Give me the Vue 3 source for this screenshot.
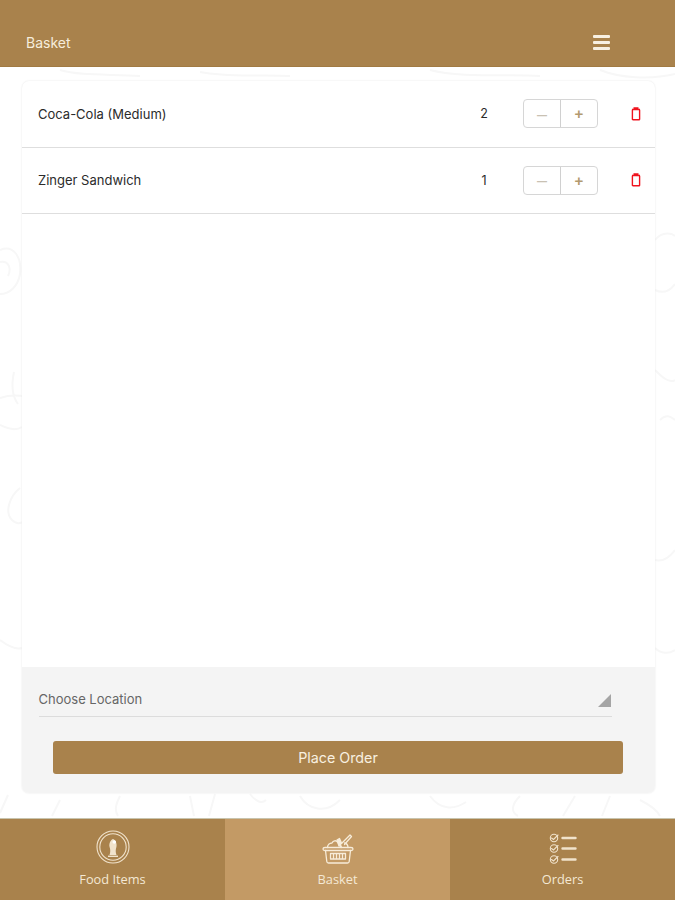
<template>
  <div class="screen">
    <svg class="doodles" viewBox="0 0 675 900" aria-hidden="true">
      <g fill="none" stroke="#f7f7f7" stroke-width="2">
        <path d="M0 250c14-6 22 8 20 24-2 12-10 20-20 20" />
        <path d="M0 262c8-2 12 6 8 14" />
        <path d="M0 398c12-4 20-2 22 -2M0 425c8 4 16 6 22 2" />
        <path d="M14 372c-3 14-2 24 4 32" />
        <path d="M20 488c-10 8-16 24-8 32 4 4 8 4 10 2" />
        <path d="M0 640c8 6 16 10 22 8" />
        <path d="M8 795l-8 18M60 800l-8 16M120 796c-4 8-6 14-2 20M190 796l4 20M215 794l-6 22M250 794c6 8 12 10 16 6M300 796c8 14 26 18 40 4" />
        <path d="M655 240c8-10 18-6 20-4M655 290c8 4 14 2 20-6" />
        <path d="M655 370c6 6 14 14 20 10M660 420c6-6 10-4 15 0" />
        <path d="M655 560c8 2 14-2 20-10M655 648c6 6 14 6 20 2" />
        <path d="M430 796c10 14 24 14 36 6M520 796c-8 8-10 16-2 20M575 796l-12 20M610 796l-8 20M640 800c12 6 18 12 20 16" />
        <path d="M60 70c20 6 50 4 80 6M200 72c30 6 60 2 90 4M430 70c30 8 80 4 110 6M600 70c20 8 50 10 75 4" />
      </g>
    </svg>

    <header class="topbar">
      <span class="title">Basket</span>
      <button class="menu" aria-label="Menu">
        <span></span><span></span><span></span>
      </button>
    </header>

    <main class="content">
      <section class="card">
        <div class="items">
          <div v-for="item in items" :key="item.name" class="row">
            <span class="name">{{ item.name }}</span>
            <span class="qty">{{ item.qty }}</span>
            <div class="stepper">
              <button class="minus" @click="dec(item)">–</button>
              <button class="plus" @click="item.qty++">+</button>
            </div>
            <button class="trash" aria-label="Remove" @click="remove(item)">
              <svg width="10" height="14" viewBox="0 0 10 14">
                <path d="M2.500 1h5M1 2.400h8" stroke="#f0131e" stroke-width="1.300" fill="none" />
                <rect x="1.400" y="2.600" width="7.200" height="10.200" rx=".6" stroke="#f0131e" stroke-width="1.400" fill="none" />
              </svg>
            </button>
          </div>
        </div>

        <div class="order">
          <div class="location">
            <span>Choose Location</span>
            <i class="corner"></i>
          </div>
          <button class="place">Place Order</button>
        </div>
      </section>
    </main>

    <nav class="tabs">
      <a class="tab">
        <svg width="36" height="36" viewBox="0 0 36 36" fill="none">
          <circle cx="18" cy="18" r="16" stroke="#f1e3cc" stroke-width="1.100" />
          <circle cx="18" cy="18" r="13.200" stroke="#f1e3cc" stroke-width="1.100" />
          <path d="M14.500 26c1-3 1-5 .1-8-.8-3 .7-7 3.400-8 2.700 1 4.200 5 3.400 8-.9 3-.9 5 .1 8z" fill="#f1e3cc" />
          <path d="M13 27.300h10" stroke="#f1e3cc" stroke-width="1.400" />
          <circle cx="19.300" cy="13" r="1.800" fill="#fff" />
        </svg>
        <span>Food Items</span>
      </a>
      <a class="tab active">
        <svg width="32" height="32" viewBox="0 0 32 32" fill="none" stroke="#f7ecd9" stroke-width="1.300" stroke-linejoin="round" stroke-linecap="round">
          <path d="M3 14.500c-1.700 0-2 .6-2 1.500s.5 1.500 1.800 1.500h26.400c1.300 0 1.800-.6 1.800-1.500s-.3-1.500-2-1.500z" />
          <path d="M3.500 17.500l1.300 11c.1 1 .8 1.500 1.700 1.500h19c.9 0 1.600-.5 1.700-1.500l1.300-11" />
          <rect x="8.500" y="20.500" width="15" height="5.500" />
          <path d="M11.500 21v4.500M14.500 21v4.500M17.500 21v4.500M20.500 21v4.500" />
          <path d="M5.500 14.500c0-2.500 2-4.500 4.500-4.500 1.200-2.500 4-3 5.500-1l3.500 5.500" />
          <path d="M18 10.500l1.500 4M26 14.500c0-2-1-4-3.500-4.500" />
          <path d="M19.500 10.500L28 2l1.500 1.500-7 8" />
          <path d="M15 7l2.500-1.500 2 4.500-2.500 3z" fill="#f7ecd9" />
        </svg>
        <span>Basket</span>
      </a>
      <a class="tab">
        <svg width="30" height="32" viewBox="0 0 30 32" fill="none" stroke="#f1e3cc" stroke-linecap="round">
          <g stroke-width="1.100">
            <circle cx="6" cy="5" r="3.700" />
            <circle cx="6" cy="15.500" r="3.700" />
            <circle cx="6" cy="26.500" r="3.700" />
            <path d="M3.500 5l2 1.500L10 2M3.500 15.500l2 1.500 4.500-4.500M3.500 26.500l2 1.500 4.500-4.500" />
          </g>
          <path d="M14.500 5h13M14.500 15.500h13M14.500 26.500h13" stroke-width="2.400" />
        </svg>
        <span>Orders</span>
      </a>
    </nav>
  </div>
</template>

<script setup>
import { ref } from 'vue'

const items = ref([
  { name: 'Coca-Cola (Medium)', qty: 2 },
  { name: 'Zinger Sandwich', qty: 1 },
])

function dec(item) {
  if (item.qty > 1) item.qty--
}
function remove(item) {
  items.value = items.value.filter((i) => i !== item)
}
</script>

<style>
html, body {
  margin: 0;
  background: #fff;
}
</style>

<style scoped>
.screen {
  position: relative;
  display: flex;
  flex-direction: column;
  height: 900px;
  overflow: hidden;
  background: #fff;
  font-family: Inter, "Liberation Sans", sans-serif;
}
.doodles {
  position: absolute;
  inset: 0;
  width: 100%;
  height: 100%;
}
.topbar {
  position: relative;
  height: 67px;
  flex: none;
  box-sizing: border-box;
  display: flex;
  align-items: center;
  justify-content: space-between;
  padding: 19px 65px 0 26px;
  background: #a9824c;
  border-bottom: 1px solid #a17a43;
}
.title {
  color: #f6eddc;
  font-size: 14px;
}
.menu {
  display: flex;
  flex-direction: column;
  gap: 3px;
  width: 17px;
  padding: 0;
  border: 0;
  background: none;
}
.menu span {
  height: 3px;
  border-radius: 1px;
  background: #f8f0e2;
}
.content {
  position: relative;
  flex: 1;
  min-height: 0;
  display: flex;
  padding: 14px 20px 25px 22px;
}
.card {
  flex: 1;
  display: flex;
  flex-direction: column;
  overflow: hidden;
  background: #fff;
  border-radius: 7px;
  box-shadow: 0 0 2px #e4e4e4;
}
.items {
  flex: 1;
}
.row {
  height: 66.500px;
  box-sizing: border-box;
  display: flex;
  align-items: center;
  padding: 0 14px 0 16px;
  border-bottom: 1.500px solid #dedede;
}
.name {
  flex: 1;
  color: #2b2b2b;
  font-size: 13px;
}
.qty {
  width: 20px;
  margin-right: 29px;
  text-align: center;
  color: #2b2b2b;
  font-size: 12.500px;
}
.stepper {
  display: flex;
  width: 75px;
  height: 29px;
  box-sizing: border-box;
  border: 1px solid #d6d6d6;
  border-radius: 4px;
}
.stepper button {
  flex: 1;
  padding: 0;
  border: 0;
  background: none;
  color: #c9c1b3;
  font-family: "Liberation Sans", sans-serif;
  font-size: 18px;
  line-height: 1;
}
.stepper .plus {
  border-left: 1px solid #d0d0d0;
  color: #b39a6f;
  font-size: 15px;
  font-weight: 700;
}
.trash {
  display: flex;
  margin-left: 33px;
  padding: 0;
  border: 0;
  background: none;
}
.order {
  height: 126px;
  flex: none;
  box-sizing: border-box;
  padding-top: 17px;
  background: #f4f4f4;
}
.location {
  position: relative;
  width: 573px;
  height: 33px;
  box-sizing: border-box;
  margin-left: 16.500px;
  padding-bottom: 2px;
  display: flex;
  align-items: center;
  color: #666;
  font-size: 13px;
  border-bottom: 1.500px solid #dcdcdc;
}
.corner {
  position: absolute;
  right: 1px;
  bottom: 9px;
  width: 0;
  height: 0;
  border-left: 13px solid transparent;
  border-bottom: 13px solid #a5a5a5;
}
.place {
  display: block;
  width: 570px;
  height: 33px;
  margin: 24px 0 0 31px;
  padding: 0;
  border: 0;
  border-radius: 3px;
  background: #a9824c;
  color: #f8f0e0;
  font-family: inherit;
  font-size: 14.300px;
}
.tabs {
  position: relative;
  flex: none;
  height: 82px;
  display: grid;
  grid-template-columns: repeat(3, 1fr);
  background: #a9824c;
  border-top: 1px solid #c8c4ae;
  box-sizing: border-box;
}
.tab {
  display: flex;
  flex-direction: column;
  align-items: center;
  justify-content: flex-end;
  gap: 5px;
  height: 81px;
  box-sizing: border-box;
  padding-bottom: 12px;
  color: #f4e8d4;
  font-family: "Open Sans", sans-serif;
  font-size: 12.800px;
}
.tab.active {
  background: #c39a65;
}
</style>
